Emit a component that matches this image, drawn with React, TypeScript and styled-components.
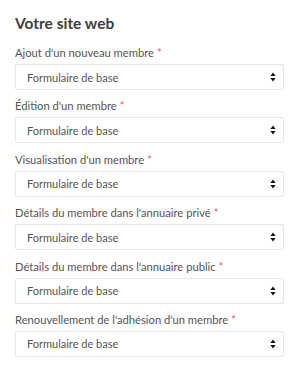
import React from "react";
import styled, { createGlobalStyle } from "styled-components";

const Global = createGlobalStyle`
  html, body { margin: 0; padding: 0; background: #ffffff; }
  body { font-family: Lato, "Open Sans", sans-serif; }
`;

const Page = styled.div`
  padding: 13px 15px 0 15px;
  display: flex;
  flex-direction: column;
`;

const Title = styled.h2`
  margin: 0 0 13px 0;
  font-size: 15.5px;
  line-height: 20px;
  font-weight: 700;
  color: #3e3e3e;
  letter-spacing: 0;
`;

const Field = styled.div`
  display: flex;
  flex-direction: column;
  gap: 4px;
  margin-bottom: 9.4px;
`;

const Label = styled.label`
  font-size: 11.2px;
  line-height: 14px;
  color: #555555;
`;

const Star = styled.span`
  color: #f0565c;
  margin-left: 3px;
  font-size: 11px;
`;

const SelectBox = styled.div`
  height: 26px;
  box-sizing: border-box;
  border: 1px solid #e2e6ee;
  border-radius: 2px;
  display: flex;
  align-items: center;
  justify-content: space-between;
  padding: 0 5px 0 11px;
  font-size: 11px;
  color: #555555;
`;

const Arrows = () => (
  <svg width="6" height="10" viewBox="0 0 6 10">
    <path d="M3 0.5 L5.6 4 L0.4 4 Z" fill="#111" />
    <path d="M3 9.5 L5.6 6 L0.4 6 Z" fill="#111" />
  </svg>
);

const ArrowSlot = styled.span`
  display: flex;
  align-items: center;
  width: 10px;
  justify-content: center;
`;

const fields = [
  "Ajout d'un nouveau membre",
  "Édition d'un membre",
  "Visualisation d'un membre",
  "Détails du membre dans l'annuaire privé",
  "Détails du membre dans l'annuaire public",
  "Renouvellement de l'adhésion d'un membre",
];

export default function App() {
  return (
    <>
      <Global />
      <Page>
        <Title>Votre site web</Title>
        {fields.map((f) => (
          <Field key={f}>
            <Label>
              {f}
              <Star>*</Star>
            </Label>
            <SelectBox>
              <span>Formulaire de base</span>
              <ArrowSlot>
                <Arrows />
              </ArrowSlot>
            </SelectBox>
          </Field>
        ))}
      </Page>
    </>
  );
}
